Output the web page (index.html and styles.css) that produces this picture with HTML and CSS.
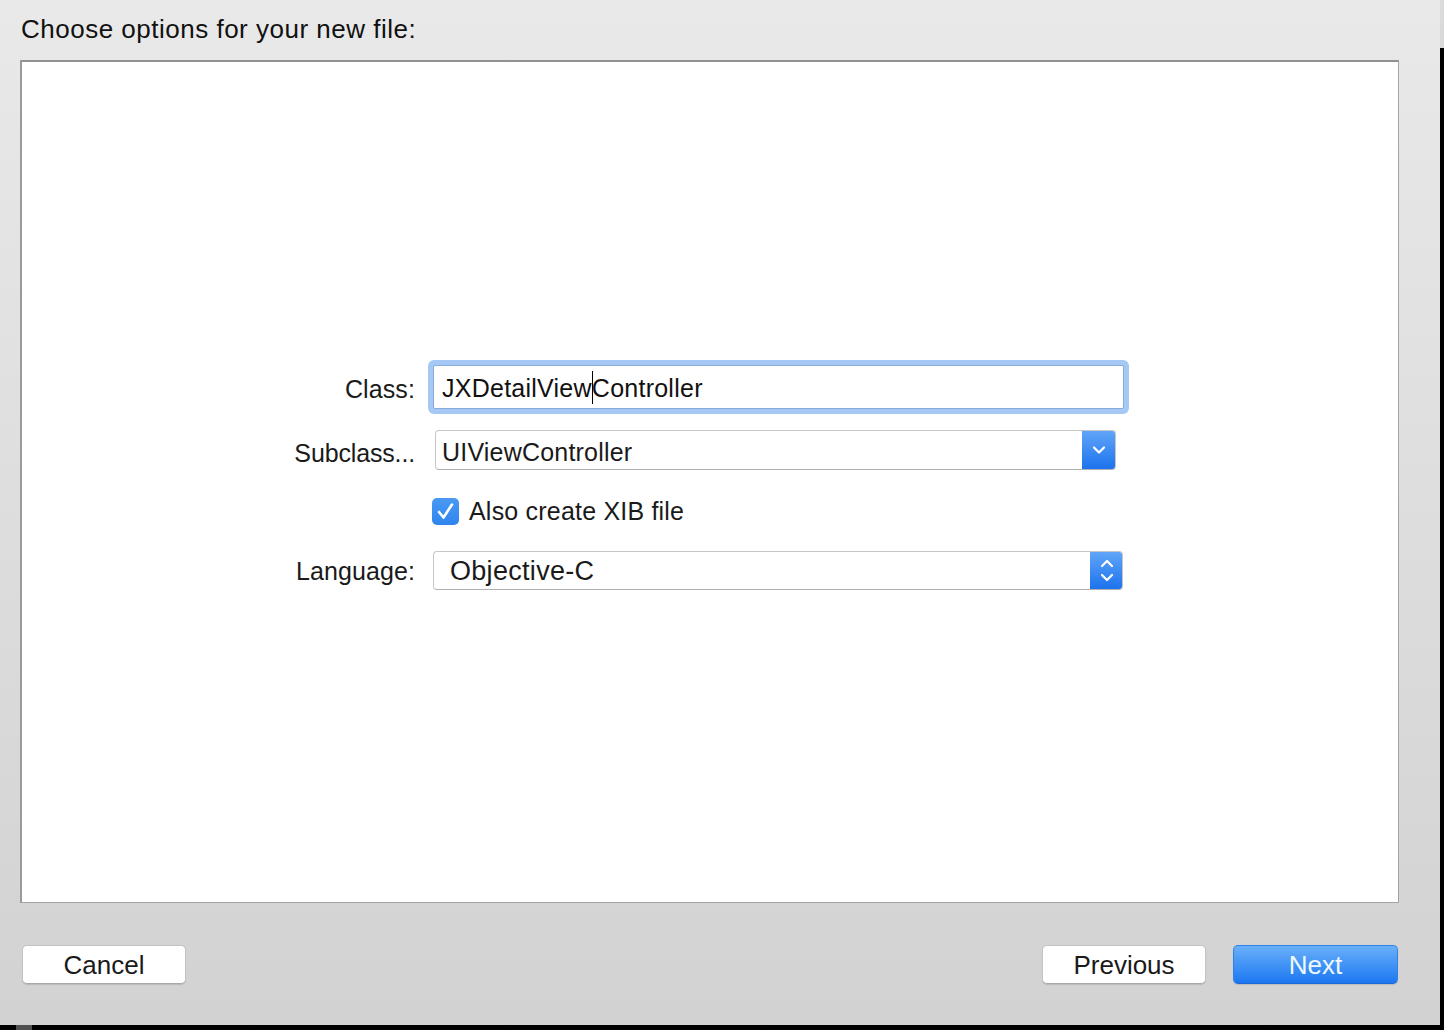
FILE: index.html
```html
<!DOCTYPE html>
<html>
<head>
<meta charset="utf-8">
<link rel="stylesheet" href="styles.css">
</head>
<body>
<div class="window">
  <div class="title">Choose options for your new file:</div>
  <div class="panel">
    <div class="form">
      <div class="label l-class">Class:</div>
      <div class="textfield">JXDetailView<span class="caret"></span>Controller</div>

      <div class="label l-sub">Subclass...</div>
      <div class="popup sub">
        <span class="popup-text">UIViewController</span>
        <span class="popup-btn">
          <svg width="14" height="10" viewBox="0 0 14 10"><path d="M2 2.5 L7 7.5 L12 2.5" fill="none" stroke="#fff" stroke-width="2.2" stroke-linecap="round" stroke-linejoin="round"/></svg>
        </span>
      </div>

      <div class="label l-empty"></div>
      <div class="check-row">
        <span class="checkbox">
          <svg width="27" height="27" viewBox="0 0 27 27"><path d="M7 14 L11.5 19.5 L20 6.5" fill="none" stroke="#fff" stroke-width="2.6" stroke-linecap="round" stroke-linejoin="round"/></svg>
        </span>
        <span class="check-label">Also create XIB file</span>
      </div>

      <div class="label l-lang">Language:</div>
      <div class="popup lang">
        <span class="popup-text">Objective-C</span>
        <span class="popup-btn stepper">
          <svg width="16" height="30" viewBox="0 0 16 30"><path d="M3 10 L8 5 L13 10" fill="none" stroke="#fff" stroke-width="2.2" stroke-linecap="round" stroke-linejoin="round"/><path d="M3 19 L8 24 L13 19" fill="none" stroke="#fff" stroke-width="2.2" stroke-linecap="round" stroke-linejoin="round"/></svg>
        </span>
      </div>
    </div>
  </div>
  <div class="footer">
    <button class="btn">Cancel</button>
    <div class="spacer"></div>
    <button class="btn">Previous</button>
    <button class="btn primary">Next</button>
  </div>
</div>
</body>
</html>
```
FILE: styles.css
```css
html, body {
  margin: 0;
  padding: 0;
}
body {
  width: 1444px;
  height: 1030px;
  overflow: hidden;
  background:
    linear-gradient(#dcdcdc, #d8d8d8) no-repeat right top / 4px 48px,
    linear-gradient(#505050, #505050) no-repeat 16px 1025px / 16px 5px,
    #000;
  font-family: "Liberation Sans", Arial, sans-serif;
  color: #1b1b1b;
}
.window {
  width: 1440px;
  height: 1025px;
  box-sizing: border-box;
  padding: 14px 41px 0 20px;
  background: linear-gradient(#e9e9e9, #d2d2d2);
  display: flex;
  flex-direction: column;
}
.title {
  font-size: 26px;
  line-height: 30px;
  letter-spacing: 0.5px;
  color: #111;
  margin: 0 0 16px 1px;
}
.panel {
  height: 843px;
  box-sizing: border-box;
  background: #fff;
  border: 1px solid #a4a4a4;
  border-top: 2px solid #929292;
  border-left: 2px solid #9a9a9a;
  padding: 303px 0 0 0;
}
.form {
  display: grid;
  grid-template-columns: 393px 710px;
  column-gap: 13px;
  grid-template-rows: 65px 68px 53px 40px;
  font-size: 25px;
  letter-spacing: 0.2px;
}
.form > * { align-self: start; }
.label {
  text-align: right;
  line-height: 30px;
  color: #1a1a1a;
  letter-spacing: 0.1px;
}
.l-class { margin-top: 9px; }
.l-sub { margin-top: 8px; letter-spacing: -0.15px; }
.l-lang { margin-top: 5px; }
.textfield {
  margin: 0 0 0 5px;
  width: 691px;
  height: 44px;
  box-sizing: border-box;
  border: 1px solid #86acdc;
  border-radius: 2px;
  box-shadow: 0 0 0 5px #a5c8f4;
  background: #fff;
  padding: 3px 0 0 8px;
  line-height: 38px;
  font-size: 25px;
  letter-spacing: 0.25px;
  color: #111;
  white-space: nowrap;
}
.caret {
  display: inline-block;
  width: 1px;
  height: 33px;
  background: #000;
  vertical-align: -7px;
  margin-right: -1px;
}
.popup {
  display: flex;
  align-items: stretch;
  box-sizing: border-box;
  background: #fff;
  border: 1px solid #c6c6c6;
  border-bottom-color: #b0b0b0;
  border-radius: 4px;
  overflow: hidden;
}
.popup.sub {
  margin: 0 0 0 7px;
  width: 681px;
  height: 40px;
}
.popup.lang {
  margin-left: 5px;
  width: 690px;
  height: 39px;
}
.popup-text {
  flex: 1;
  line-height: 33px;
  padding: 5px 0 0 6px;
  color: #1a1a1a;
  white-space: nowrap;
}
.popup.lang .popup-text {
  padding: 0 0 0 16px;
  font-size: 27px;
  letter-spacing: 0.3px;
  line-height: 38px;
}
.popup-btn {
  width: 34px;
  margin: -1px -1px -1px 0;
  background: linear-gradient(#62a6f8, #1b72ee);
  display: flex;
  align-items: center;
  justify-content: center;
}
.popup.lang .popup-btn { width: 33px; }
.check-row {
  margin: 0 0 0 4px;
  display: flex;
  align-items: center;
  height: 27px;
}
.checkbox {
  width: 27px;
  height: 27px;
  border-radius: 5px;
  background: linear-gradient(#4a99f4, #2f85ee);
  display: flex;
}
.check-label {
  margin-left: 10px;
  line-height: 27px;
  color: #1a1a1a;
}
.footer {
  margin-top: 42px;
  display: flex;
  align-items: center;
  padding: 0 1px 0 2px;
}
.spacer { flex: 1; }
.btn {
  width: 164px;
  height: 39px;
  box-sizing: border-box;
  border: 1px solid #c4c4c4;
  border-bottom-color: #a8a8a8;
  border-radius: 5px;
  background: #fff;
  font-family: "Liberation Sans", Arial, sans-serif;
  font-size: 26px;
  line-height: 36px;
  color: #1a1a1a;
  padding: 0;
  box-shadow: 0 1px 1px rgba(0,0,0,0.12);
}
.btn.primary {
  margin-left: 27px;
  width: 165px;
  border: 1px solid #2f82ea;
  border-bottom-color: #1a68d6;
  background: linear-gradient(#6ab0fa, #1c77f1);
  color: #eefaff;
}
```
